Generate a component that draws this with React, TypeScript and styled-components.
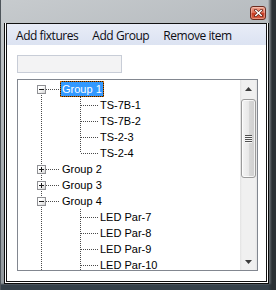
import React from "react";
import styled, { createGlobalStyle, css } from "styled-components";

const GlobalStyle = createGlobalStyle`
  html, body { margin: 0; padding: 0; background: #6f767c; }
  body { width: 276px; height: 290px; overflow: hidden; }
  #root { width: 276px; height: 290px; }
`;

const LINE = "#4a4a4a";

const dotV = css`
  background-image: linear-gradient(to bottom, ${LINE} 50%, transparent 50%);
  background-size: 1px 2px;
`;
const dotH = css`
  background-image: linear-gradient(to right, ${LINE} 50%, transparent 50%);
  background-size: 2px 1px;
`;

const Frame = styled.div`
  width: 276px;
  height: 290px;
  box-sizing: border-box;
  display: flex;
  flex-direction: column;
  overflow: hidden;
  background:
    linear-gradient(to right, #4e555b 0, #4e555b 1px, rgba(78, 85, 91, 0) 1px),
    linear-gradient(to left, #2b3135 0, #2b3135 4px, rgba(43, 49, 53, 0) 8px),
    linear-gradient(to top, #36414a 0, #36414a 5px, rgba(54, 65, 74, 0) 7px),
    linear-gradient(165deg, #c7cbce 0%, #b3b8bc 30%, #9ca2a7 65%, #80878c 100%);
`;

const TitleBar = styled.div`
  height: 23px;
  flex: none;
  box-sizing: border-box;
  display: flex;
  justify-content: flex-end;
  align-items: flex-start;
  padding: 6px 10px 0 0;
`;

const CloseButton = styled.div`
  width: 16px;
  height: 14px;
  box-sizing: border-box;
  border: 1px solid #6b2b1f;
  border-radius: 3px;
  display: flex;
  align-items: center;
  justify-content: center;
  background: linear-gradient(
    to bottom,
    #f0a48f 0%,
    #e0725a 45%,
    #c93a22 55%,
    #db6548 100%
  );
  box-shadow: inset 0 0 0 1px rgba(255, 255, 255, 0.3);
`;

const ClientOuter = styled.div`
  margin-left: 4px;
  width: 265px;
  height: 261px;
  flex: none;
  box-sizing: border-box;
  border: 1px solid #0c0c0c;
  border-top: none;
  padding: 0 1px 1px;
  background: #ffffff;
  display: flex;
`;

const Client = styled.div`
  flex: 1;
  box-sizing: border-box;
  border: 1px solid #111111;
  background: #ffffff;
  display: flex;
  flex-direction: column;
`;

const MenuBar = styled.div`
  height: 21px;
  flex: none;
  display: flex;
  padding-left: 2px;
  background: linear-gradient(to bottom, #e8ecf7 0%, #dce3f2 100%);
`;

const MenuItem = styled.div`
  padding: 2px 7px 0;
  line-height: 19px;
  font-family: "Open Sans", "Noto Sans", sans-serif;
  font-size: 12px;
  letter-spacing: -0.45px;
  color: #0d0d14;
  white-space: nowrap;
`;

const Body = styled.div`
  display: flex;
  flex-direction: column;
  gap: 6px;
  padding: 10px 0 0 10px;
`;

const TextBox = styled.div`
  width: 105px;
  height: 18px;
  box-sizing: border-box;
  border: 1px solid #c8cdd7;
  background: #f3f3f4;
`;

const Tree = styled.div`
  width: 241px;
  height: 192px;
  box-sizing: border-box;
  border: 1px solid #828790;
  background: #ffffff;
  display: flex;
`;

const TreeRows = styled.div`
  flex: 1;
  overflow: hidden;
  padding-top: 1px;
  display: flex;
  flex-direction: column;
`;

const Row = styled.div`
  height: 16px;
  flex: none;
  display: flex;
`;

const RootGuide = styled.div<{ $first?: boolean; $connector?: boolean }>`
  position: relative;
  width: 42px;
  flex: none;
  box-sizing: border-box;
  display: flex;
  align-items: flex-start;
  padding-left: 19px;
  &::before {
    content: "";
    position: absolute;
    left: 23px;
    width: 1px;
    top: ${(p) => (p.$first ? 8 : 0)}px;
    bottom: 0;
    ${dotV}
  }
  ${(p) =>
    p.$connector &&
    css`
      &::after {
        content: "";
        position: absolute;
        left: 28px;
        width: 14px;
        top: 8px;
        height: 1px;
        ${dotH}
      }
    `}
`;

const ChildGuide = styled.div<{ $last?: boolean }>`
  position: relative;
  width: 38px;
  flex: none;
  &::before {
    content: "";
    position: absolute;
    left: 20px;
    width: 1px;
    top: 0;
    height: ${(p) => (p.$last ? "8px" : "16px")};
    ${dotV}
  }
  &::after {
    content: "";
    position: absolute;
    left: 21px;
    width: 17px;
    top: 8px;
    height: 1px;
    ${dotH}
  }
`;

const Expander = styled.div<{ $open: boolean }>`
  position: relative;
  z-index: 1;
  margin-top: 4px;
  width: 9px;
  height: 9px;
  box-sizing: border-box;
  border: 1px solid #8f9094;
  background: linear-gradient(135deg, #ffffff 35%, #d4d4d4 100%);
  &::before {
    content: "";
    position: absolute;
    left: 1px;
    top: 3px;
    width: 5px;
    height: 1px;
    background: #1a1a1a;
  }
  ${(p) =>
    !p.$open &&
    css`
      &::after {
        content: "";
        position: absolute;
        left: 3px;
        top: 1px;
        width: 1px;
        height: 5px;
        background: #1a1a1a;
      }
    `}
`;

const Label = styled.div<{ $selected?: boolean }>`
  height: 16px;
  box-sizing: border-box;
  padding: 0 1px;
  border: 1px dotted transparent;
  line-height: 14px;
  font-family: "Liberation Sans", Arial, sans-serif;
  font-size: 11px;
  color: #000000;
  white-space: nowrap;
  ${(p) =>
    p.$selected &&
    css`
      border-color: #cf6a00;
      background: linear-gradient(#3399ff, #3399ff) padding-box, #1b1b1b;
      color: #ffffff;
    `}
`;

const ScrollBar = styled.div`
  width: 17px;
  flex: none;
  display: flex;
  flex-direction: column;
  background: linear-gradient(
    to right,
    #e2e2e2 0,
    #f0f0f0 2px,
    #f0f0f0 15px,
    #e4e4e4 17px
  );
`;

const ScrollButton = styled.div`
  height: 17px;
  flex: none;
  display: flex;
  align-items: center;
  justify-content: center;
`;

const Track = styled.div`
  flex: 1;
  display: flex;
  flex-direction: column;
  align-items: flex-start;
`;

const Thumb = styled.div`
  margin: 2px 0 0 1px;
  width: 15px;
  height: 79px;
  box-sizing: border-box;
  border: 1px solid #9a9a9a;
  border-radius: 3px;
  background: linear-gradient(
    to right,
    #f4f4f4 0%,
    #e8e8e8 50%,
    #d8d8d8 51%,
    #cfcfcf 100%
  );
  box-shadow: inset 0 0 0 1px rgba(255, 255, 255, 0.75);
  display: flex;
  align-items: center;
  justify-content: center;
`;

const Grip = styled.div`
  width: 7px;
  height: 8px;
  background-image: linear-gradient(
    to bottom,
    #505050 0,
    #505050 1px,
    #f7f7f7 1px,
    #f7f7f7 2px
  );
  background-size: 7px 2px;
`;

type Node = {
  kind: "group" | "child";
  label: string;
  open?: boolean;
  first?: boolean;
  last?: boolean;
  selected?: boolean;
};

const nodes: Node[] = [
  { kind: "group", label: "Group 1", open: true, first: true, selected: true },
  { kind: "child", label: "TS-7B-1" },
  { kind: "child", label: "TS-7B-2" },
  { kind: "child", label: "TS-2-3" },
  { kind: "child", label: "TS-2-4", last: true },
  { kind: "group", label: "Group 2", open: false },
  { kind: "group", label: "Group 3", open: false },
  { kind: "group", label: "Group 4", open: true },
  { kind: "child", label: "LED Par-7" },
  { kind: "child", label: "LED Par-8" },
  { kind: "child", label: "LED Par-9" },
  { kind: "child", label: "LED Par-10" },
];

const CloseGlyph = () => (
  <svg width="9" height="8" viewBox="0 0 9 8">
    <path d="M1.5 1.2 L7.5 6.8 M7.5 1.2 L1.5 6.8" stroke="#5a1c12" strokeWidth="2.6" strokeLinecap="square" />
    <path d="M1.8 1.5 L7.2 6.5 M7.2 1.5 L1.8 6.5" stroke="#ffffff" strokeWidth="1.5" strokeLinecap="square" />
  </svg>
);

const ArrowUp = () => (
  <svg width="7" height="4" viewBox="0 0 7 4">
    <polygon points="0,4 3.5,0 7,4" fill="#3c3c3c" />
  </svg>
);

const ArrowDown = () => (
  <svg width="7" height="4" viewBox="0 0 7 4">
    <polygon points="0,0 3.5,4 7,0" fill="#3c3c3c" />
  </svg>
);

export default function App() {
  return (
    <>
      <GlobalStyle />
      <Frame>
        <TitleBar>
          <CloseButton>
            <CloseGlyph />
          </CloseButton>
        </TitleBar>
        <ClientOuter>
          <Client>
            <MenuBar>
              <MenuItem>Add fixtures</MenuItem>
              <MenuItem>Add Group</MenuItem>
              <MenuItem>Remove item</MenuItem>
            </MenuBar>
            <Body>
              <TextBox />
              <Tree>
                <TreeRows>
                  {nodes.map((n) =>
                    n.kind === "group" ? (
                      <Row key={n.label}>
                        <RootGuide $first={n.first} $connector>
                          <Expander $open={!!n.open} />
                        </RootGuide>
                        <Label $selected={n.selected}>{n.label}</Label>
                      </Row>
                    ) : (
                      <Row key={n.label}>
                        <RootGuide />
                        <ChildGuide $last={n.last} />
                        <Label>{n.label}</Label>
                      </Row>
                    )
                  )}
                </TreeRows>
                <ScrollBar>
                  <ScrollButton>
                    <ArrowUp />
                  </ScrollButton>
                  <Track>
                    <Thumb>
                      <Grip />
                    </Thumb>
                  </Track>
                  <ScrollButton>
                    <ArrowDown />
                  </ScrollButton>
                </ScrollBar>
              </Tree>
            </Body>
          </Client>
        </ClientOuter>
      </Frame>
    </>
  );
}
